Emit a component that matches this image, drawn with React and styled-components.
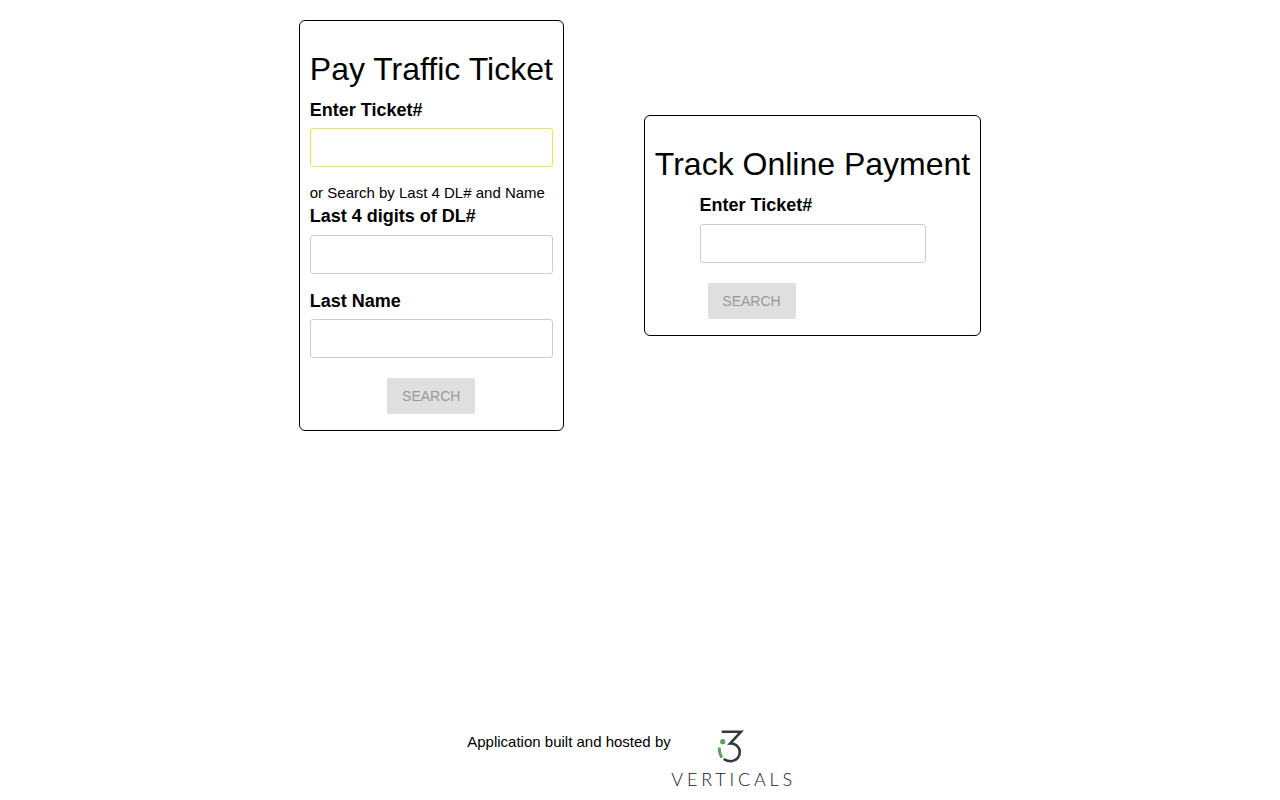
import React from "react";
import styled, { createGlobalStyle } from "styled-components";

const App = () => {
  return (
    <>
      <GlobalStyle />
      <Page>
        <Cards>
          <Card>
            <Title>Pay Traffic Ticket</Title>
            <Field>
              <Label $tight>Enter Ticket#</Label>
              <Input $active />
            </Field>
            <Hint>or Search by Last 4 DL# and Name</Hint>
            <Field>
              <Label>Last 4 digits of DL#</Label>
              <Input />
            </Field>
            <Field $next>
              <Label $tight>Last Name</Label>
              <Input />
            </Field>
            <ButtonRow $center>
              <SearchBtn disabled>SEARCH</SearchBtn>
            </ButtonRow>
          </Card>

          <Card>
            <Title>Track Online Payment</Title>
            <NarrowForm>
              <Field>
                <Label>Enter Ticket#</Label>
                <Input />
              </Field>
              <ButtonRow>
                <SearchBtn disabled>SEARCH</SearchBtn>
              </ButtonRow>
            </NarrowForm>
          </Card>
        </Cards>

        <Footer>
          <FooterText>Application built and hosted by</FooterText>
          <Logo>
            <LogoMark viewBox="0 0 30 36">
              <path d="M6.7 2.7H26L15.2 14.4A8.9 8.9 0 0 1 16.5 32.3C13.5 32.3 11 31.6 8.6 30" fill="none" stroke="#333a3c" strokeWidth="2.6" />
              <circle cx="7.7" cy="12.7" r="2.6" fill="#5da356" />
              <path d="M4.4 18.5C4 22 4.8 25.5 7 28.5" fill="none" stroke="#5da356" strokeWidth="3" />
            </LogoMark>
            <LogoText>VERTICALS</LogoText>
          </Logo>
        </Footer>
      </Page>
    </>
  );
};

export default App;

const GlobalStyle = createGlobalStyle`
  body {
    margin: 0;
    background-color: #fff;
    color: #000;
    font-family: "Liberation Sans", Arial, sans-serif;
  }
`;

const Page = styled.div`
  height: 800px;
  display: flex;
  flex-direction: column;
  justify-content: space-between;
  padding-top: 20px;
  padding-bottom: 10px;
  box-sizing: border-box;
`;

const Cards = styled.div`
  display: flex;
  justify-content: center;
  align-items: center;
  gap: 80px;
`;

const Card = styled.div`
  border: 1px solid #000;
  border-radius: 6px;
  padding: 30px 10px 16px;
`;

const Title = styled.h1`
  margin: 0 0 12px;
  font-size: 32px;
  line-height: 37px;
  font-weight: 400;
  white-space: nowrap;
`;

const Field = styled.div`
  margin-top: ${(props) => (props.$next ? "17px" : "0")};
`;

const Label = styled.label`
  display: block;
  font-size: 18px;
  line-height: 21px;
  font-weight: 700;
  margin-bottom: ${(props) => (props.$tight ? "7px" : "8px")};
`;

const Input = styled.input`
  display: block;
  width: 100%;
  height: 39px;
  box-sizing: border-box;
  border: 1px solid ${(props) => (props.$active ? "#e6e650" : "#ccc")};
  border-radius: 3px;
  background-color: #fff;
  outline: none;
`;

const Hint = styled.div`
  margin-top: 17px;
  font-size: 15px;
  line-height: 17px;
  margin-bottom: 5px;
`;

const NarrowForm = styled.div`
  width: 226px;
  margin: 0 auto;
`;

const ButtonRow = styled.div`
  display: flex;
  justify-content: ${(props) => (props.$center ? "center" : "flex-start")};
  padding-left: ${(props) => (props.$center ? "0" : "8px")};
  margin-top: 20px;
`;

const SearchBtn = styled.button`
  width: 88px;
  height: 36px;
  border: none;
  border-radius: 2px;
  background-color: #dfdfdf;
  color: #999;
  font-family: inherit;
  font-size: 14px;
`;

const Footer = styled.div`
  display: flex;
  justify-content: center;
  align-items: flex-start;
  padding-right: 20px;
`;

const FooterText = styled.span`
  font-size: 15px;
  line-height: 17px;
  margin-top: 4px;
`;

const Logo = styled.div`
  display: flex;
  flex-direction: column;
  align-items: center;
  width: 122px;
`;

const LogoMark = styled.svg`
  width: 30px;
  height: 36px;
  margin-right: 4px;
`;

const LogoText = styled.span`
  font-family: Lato, sans-serif;
  font-weight: 300;
  font-size: 18px;
  line-height: 22px;
  letter-spacing: 3.8px;
  margin-top: 3px;
  margin-right: -3.8px;
  color: #15181a;
  white-space: nowrap;
`;
